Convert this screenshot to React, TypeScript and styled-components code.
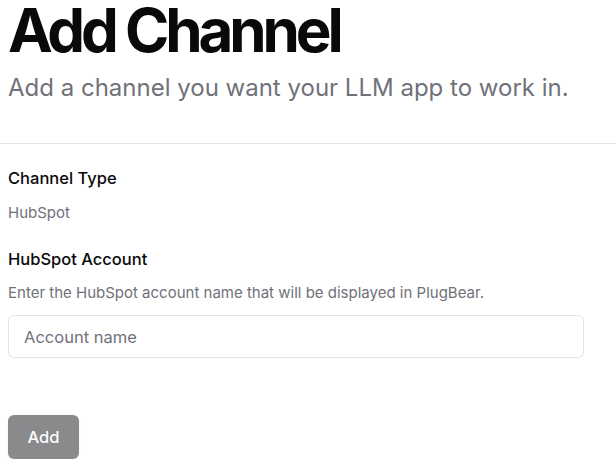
import React from "react";
import styled, { createGlobalStyle } from "styled-components";

const GlobalStyle = createGlobalStyle`
  body {
    margin: 0;
    background: #ffffff;
    font-family: Inter, "Noto Sans", sans-serif;
    color: #09090b;
  }
`;

const Page = styled.div`
  display: flex;
  flex-direction: column;
`;

const Header = styled.header`
  padding: 0 8px 39px;
  border-bottom: 1px solid #e4e4e7;
`;

const Title = styled.h1`
  margin: 0;
  font-size: 60px;
  line-height: 60px;
  font-weight: 700;
  letter-spacing: -0.068em;
`;

const Subtitle = styled.p`
  margin: 12px 0 0;
  font-size: 24px;
  line-height: 32px;
  color: #71717a;
`;

const Form = styled.form`
  display: flex;
  flex-direction: column;
  padding: 22px 8px 0;
`;

const Field = styled.div<{ $gap?: number }>`
  display: flex;
  flex-direction: column;
  gap: ${(p) => p.$gap ?? 12}px;
  margin-bottom: 23px;
`;

const Label = styled.label`
  font-size: 16.5px;
  line-height: 24px;
  font-weight: 500;
`;

const Muted = styled.div`
  font-size: 15px;
  line-height: 22px;
  color: #71717a;
`;

const Input = styled.input`
  box-sizing: border-box;
  width: 576px;
  height: 43px;
  padding: 0 15px;
  border: 1px solid #e4e4e7;
  border-radius: 6px;
  font-family: inherit;
  font-size: 16.5px;
  color: #09090b;
  outline: none;
  &::placeholder {
    color: #71717a;
  }
`;

const Button = styled.button`
  align-self: flex-start;
  width: 71px;
  height: 44px;
  margin-top: 34px;
  border: none;
  border-radius: 6px;
  background: #18181b;
  opacity: 0.5;
  color: #fafafa;
  font-family: inherit;
  font-size: 16.5px;
  font-weight: 500;
  box-shadow: 0 1px 2px rgba(0, 0, 0, 0.1);
`;

export default function App() {
  return (
    <Page>
      <GlobalStyle />
      <Header>
        <Title>Add Channel</Title>
        <Subtitle>Add a channel you want your LLM app to work in.</Subtitle>
      </Header>
      <Form onSubmit={(e) => e.preventDefault()}>
        <Field>
          <Label>Channel Type</Label>
          <Muted>HubSpot</Muted>
        </Field>
        <Field $gap={11}>
          <Label htmlFor="account">HubSpot Account</Label>
          <Muted>Enter the HubSpot account name that will be displayed in PlugBear.</Muted>
          <Input id="account" placeholder="Account name" />
        </Field>
        <Button type="submit" disabled>
          Add
        </Button>
      </Form>
    </Page>
  );
}
